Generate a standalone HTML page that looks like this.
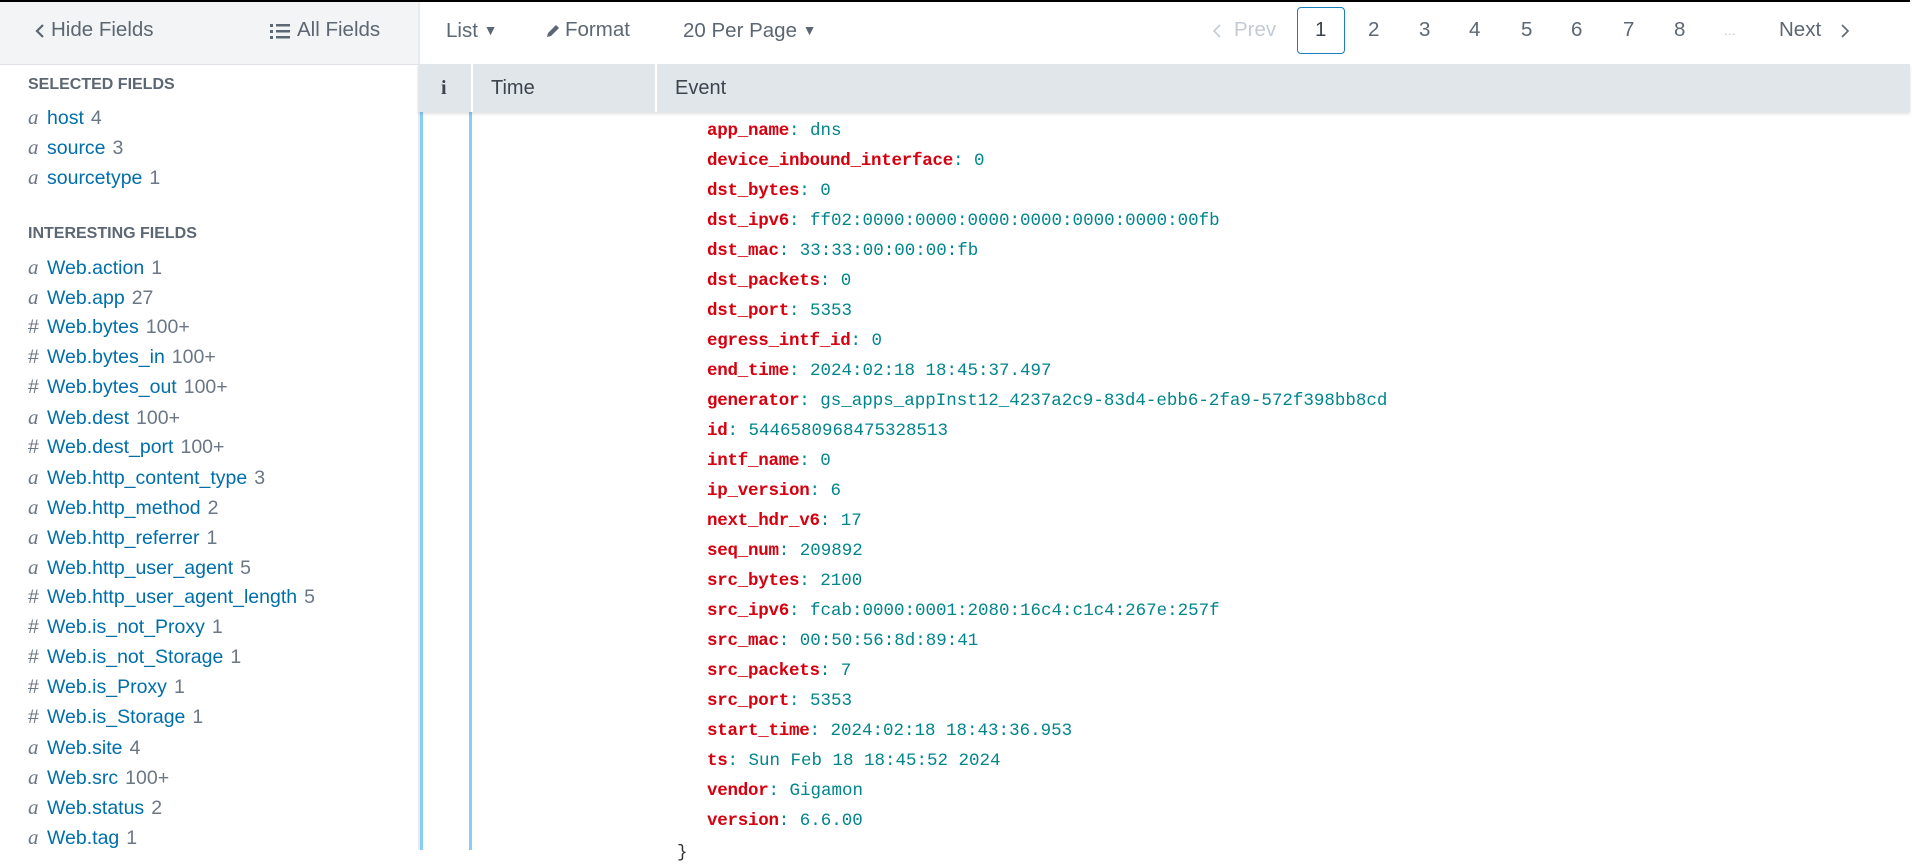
<!DOCTYPE html>
<html><head><meta charset="utf-8"><style>
*{margin:0;padding:0;box-sizing:border-box}
body{width:1914px;height:850px;overflow:hidden;background:#fff;font-family:"Liberation Sans",sans-serif;position:relative;color:#5c6773}
.abs{position:absolute;white-space:nowrap}
#topline{left:0;top:0;width:1910px;height:2px;background:#000}
#sbhead{left:0;top:2px;width:418px;height:63px;background:#f2f4f5;border-bottom:1px solid #dfe3e7}
#sbborder{left:418px;top:2px;width:2px;height:848px;background:#e8ebee}
.ht{font-size:20.5px;color:#5c6773;line-height:22px;top:19px}
.sec{font-size:16px;font-weight:bold;color:#5c6773;line-height:20px}
.fld{font-size:19.5px;line-height:30px;height:30px;left:28px;overflow:visible}
.fld i{font-family:"Liberation Serif",serif;color:#6b7785;font-size:21px;line-height:30px;display:inline-block;width:19px}
.fld .h{display:inline-block;width:19px;color:#6b7785}
.fld b{font-weight:normal;color:#006eaa}
.fld span.c{color:#6b7785;margin-left:7px}
#thead{left:418px;top:64px;width:1492px;height:48px;background:#e1e6eb;box-shadow:0 2px 3px rgba(0,0,0,.12)}
.th{font-size:20px;color:#3c444d;top:77px;line-height:22px}
.sep{top:64px;width:2px;height:48px;background:#fff}
.bl{top:112px;width:3px;height:738px;background:#88cdf5}
.ev{left:707px;top:116px;font-family:"Liberation Mono",monospace;font-size:17.5px;line-height:30px;color:#00858c}
.ev b{color:#d6000f;letter-spacing:-0.25px}
.pg{font-size:20.5px;color:#5c6773;top:19px;line-height:22px}
.car{font-size:14px;vertical-align:2px}
</style></head><body>
<div class="abs" id="sbhead"></div>
<div class="abs" id="topline"></div>
<div class="abs" id="sbborder"></div>
<div class="abs ht" style="left:35px;top:22px"><svg width="10" height="16" viewBox="0 0 10 16"><path d="M8 2 L2 8 L8 14" fill="none" stroke="#5c6773" stroke-width="2.2"/></svg></div>
<div class="abs ht" style="left:51px">Hide Fields</div>
<div class="abs ht" style="left:270px;top:22px"><svg width="20" height="16" viewBox="0 0 20 16"><rect x="0" y="1" width="3" height="3" fill="#5c6773"/><rect x="0" y="7" width="3" height="3" fill="#5c6773"/><rect x="0" y="13" width="3" height="3" fill="#5c6773"/><rect x="6" y="1" width="14" height="2.5" fill="#5c6773"/><rect x="6" y="7" width="14" height="2.5" fill="#5c6773"/><rect x="6" y="13" width="14" height="2.5" fill="#5c6773"/></svg></div>
<div class="abs ht" style="left:297px">All Fields</div>

<div class="abs ht" style="left:446px">List <span class="car">&#9660;</span></div>
<div class="abs ht" style="left:545px;top:22px"><svg width="16" height="16" viewBox="0 0 16 16"><path d="M2 14 L3 10 L11 2 L14 5 L6 13 Z" fill="#5c6773"/></svg></div>
<div class="abs ht" style="left:565px">Format</div>
<div class="abs ht" style="left:683px">20 Per Page <span class="car">&#9660;</span></div>

<div class="abs pg" style="left:1212px;top:22px"><svg width="10" height="16" viewBox="0 0 10 16"><path d="M8 2 L2 8 L8 14" fill="none" stroke="#c3cbd4" stroke-width="1.6"/></svg></div>
<div class="abs pg" style="left:1234px;color:#c3cbd4">Prev</div>
<div class="abs" style="left:1297px;top:7px;width:48px;height:47px;border:1px solid #1a7fbf;border-radius:4px"></div>
<div class="abs pg" style="left:1315px;color:#3c444d">1</div>
<div class="abs pg" style="left:1368px">2</div>
<div class="abs pg" style="left:1419px">3</div>
<div class="abs pg" style="left:1469px">4</div>
<div class="abs pg" style="left:1521px">5</div>
<div class="abs pg" style="left:1571px">6</div>
<div class="abs pg" style="left:1623px">7</div>
<div class="abs pg" style="left:1674px">8</div>
<div class="abs pg" style="left:1724px;color:#c3cbd4;font-size:14px">...</div>
<div class="abs pg" style="left:1779px">Next</div>
<div class="abs pg" style="left:1840px;top:22px"><svg width="10" height="16" viewBox="0 0 10 16"><path d="M2 2 L8 8 L2 14" fill="none" stroke="#5c6773" stroke-width="1.6"/></svg></div>

<div class="abs sec" style="left:28px;top:75px">SELECTED FIELDS</div>
<div class="abs fld" style="top:102px"><i>a</i><b>host</b><span class="c">4</span></div>
<div class="abs fld" style="top:132px"><i>a</i><b>source</b><span class="c">3</span></div>
<div class="abs fld" style="top:162px"><i>a</i><b>sourcetype</b><span class="c">1</span></div>
<div class="abs sec" style="left:28px;top:224px">INTERESTING FIELDS</div>
<div class="abs" style="left:0;top:252px">
<div class="fld" style="position:relative"><i>a</i><b>Web.action</b><span class="c">1</span></div>
<div class="fld" style="position:relative"><i>a</i><b>Web.app</b><span class="c">27</span></div>
<div class="fld" style="position:relative"><span class="h">#</span><b>Web.bytes</b><span class="c">100+</span></div>
<div class="fld" style="position:relative"><span class="h">#</span><b>Web.bytes_in</b><span class="c">100+</span></div>
<div class="fld" style="position:relative"><span class="h">#</span><b>Web.bytes_out</b><span class="c">100+</span></div>
<div class="fld" style="position:relative"><i>a</i><b>Web.dest</b><span class="c">100+</span></div>
<div class="fld" style="position:relative"><span class="h">#</span><b>Web.dest_port</b><span class="c">100+</span></div>
<div class="fld" style="position:relative"><i>a</i><b>Web.http_content_type</b><span class="c">3</span></div>
<div class="fld" style="position:relative"><i>a</i><b>Web.http_method</b><span class="c">2</span></div>
<div class="fld" style="position:relative"><i>a</i><b>Web.http_referrer</b><span class="c">1</span></div>
<div class="fld" style="position:relative"><i>a</i><b>Web.http_user_agent</b><span class="c">5</span></div>
<div class="fld" style="position:relative"><span class="h">#</span><b>Web.http_user_agent_length</b><span class="c">5</span></div>
<div class="fld" style="position:relative"><span class="h">#</span><b>Web.is_not_Proxy</b><span class="c">1</span></div>
<div class="fld" style="position:relative"><span class="h">#</span><b>Web.is_not_Storage</b><span class="c">1</span></div>
<div class="fld" style="position:relative"><span class="h">#</span><b>Web.is_Proxy</b><span class="c">1</span></div>
<div class="fld" style="position:relative"><span class="h">#</span><b>Web.is_Storage</b><span class="c">1</span></div>
<div class="fld" style="position:relative"><i>a</i><b>Web.site</b><span class="c">4</span></div>
<div class="fld" style="position:relative"><i>a</i><b>Web.src</b><span class="c">100+</span></div>
<div class="fld" style="position:relative"><i>a</i><b>Web.status</b><span class="c">2</span></div>
<div class="fld" style="position:relative"><i>a</i><b>Web.tag</b><span class="c">1</span></div>
</div>

<div class="abs bl" style="left:420px"></div>
<div class="abs bl" style="left:469px"></div>
<div class="abs" id="thead"></div>
<div class="abs sep" style="left:471px"></div>
<div class="abs sep" style="left:655px"></div>
<div class="abs th" style="left:441px;font-family:'Liberation Serif',serif;font-weight:bold">i</div>
<div class="abs th" style="left:491px">Time</div>
<div class="abs th" style="left:675px">Event</div>

<div class="abs ev">
<div><b>app_name</b>: dns</div>
<div><b>device_inbound_interface</b>: 0</div>
<div><b>dst_bytes</b>: 0</div>
<div><b>dst_ipv6</b>: ff02:0000:0000:0000:0000:0000:0000:00fb</div>
<div><b>dst_mac</b>: 33:33:00:00:00:fb</div>
<div><b>dst_packets</b>: 0</div>
<div><b>dst_port</b>: 5353</div>
<div><b>egress_intf_id</b>: 0</div>
<div><b>end_time</b>: 2024:02:18 18:45:37.497</div>
<div><b>generator</b>: gs_apps_appInst12_4237a2c9-83d4-ebb6-2fa9-572f398bb8cd</div>
<div><b>id</b>: 5446580968475328513</div>
<div><b>intf_name</b>: 0</div>
<div><b>ip_version</b>: 6</div>
<div><b>next_hdr_v6</b>: 17</div>
<div><b>seq_num</b>: 209892</div>
<div><b>src_bytes</b>: 2100</div>
<div><b>src_ipv6</b>: fcab:0000:0001:2080:16c4:c1c4:267e:257f</div>
<div><b>src_mac</b>: 00:50:56:8d:89:41</div>
<div><b>src_packets</b>: 7</div>
<div><b>src_port</b>: 5353</div>
<div><b>start_time</b>: 2024:02:18 18:43:36.953</div>
<div><b>ts</b>: Sun Feb 18 18:45:52 2024</div>
<div><b>vendor</b>: Gigamon</div>
<div><b>version</b>: 6.6.00</div>
</div>
<div class="abs" style="left:677px;top:838px;font-family:'Liberation Mono',monospace;font-size:17.5px;line-height:30px;color:#333">}</div>
</body></html>
